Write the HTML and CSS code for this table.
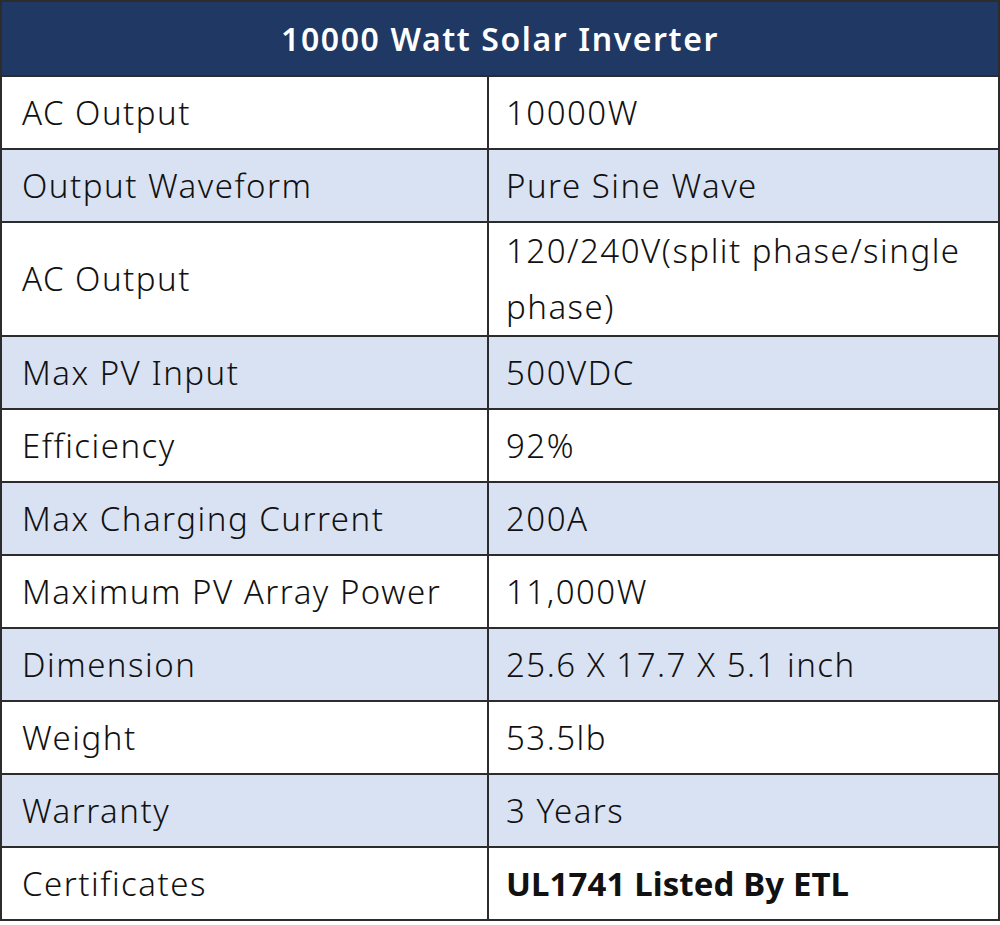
FILE: index.html
```html
<!DOCTYPE html>
<html>
<head>
<meta charset="utf-8">
<link rel="stylesheet" href="styles.css">
</head>
<body>
<table class="spec">
  <colgroup><col class="c1"><col class="c2"></colgroup>
  <thead>
    <tr class="head"><th colspan="2">10000 Watt Solar Inverter</th></tr>
  </thead>
  <tbody>
    <tr class="w"><td>AC Output</td><td>10000W</td></tr>
    <tr class="b"><td>Output Waveform</td><td>Pure Sine Wave</td></tr>
    <tr class="w tall"><td>AC Output</td><td>120/240V(split phase/single phase)</td></tr>
    <tr class="b"><td>Max PV Input</td><td>500VDC</td></tr>
    <tr class="w"><td>Efficiency</td><td>92%</td></tr>
    <tr class="b"><td>Max Charging Current</td><td>200A</td></tr>
    <tr class="w"><td>Maximum PV Array Power</td><td>11,000W</td></tr>
    <tr class="b"><td>Dimension</td><td>25.6 X 17.7 X 5.1 inch</td></tr>
    <tr class="w"><td>Weight</td><td>53.5lb</td></tr>
    <tr class="b"><td>Warranty</td><td>3 Years</td></tr>
    <tr class="w"><td>Certificates</td><td class="bold">UL1741 Listed By ETL</td></tr>
  </tbody>
</table>
</body>
</html>
```

FILE: styles.css
```css
html, body {
  margin: 0;
  padding: 0;
  background: #ffffff;
}
.spec {
  border-collapse: collapse;
  width: 998px;
  table-layout: fixed;
  font-family: "Noto Sans", "Noto Sans CJK SC", sans-serif;
  color: #111111;
}
.c1 { width: 487px; }
.c2 { width: 511px; }
.spec th, .spec td {
  border: 2px solid #2c2c2c;
  padding: 0 8px 0 17px;
  text-align: left;
  vertical-align: middle;
  font-size: 33px;
  font-weight: 300;
  letter-spacing: 1.5px;
  line-height: 56px;
}
.spec td:first-child { padding-left: 20px; }
.head th {
  background: #1f3864;
  color: #ffffff;
  font-size: 32px;
  font-weight: 600;
  letter-spacing: 1.6px;
  text-align: center;
  padding: 0;
}
.spec tr { height: 73px; }
.spec tr.head { height: 75px; }
.spec tr.tall { height: 114px; }
.b td { background: #d9e2f3; }
.w td { background: #ffffff; }
.spec td.bold { font-weight: 700; letter-spacing: 0.1px; }
```
